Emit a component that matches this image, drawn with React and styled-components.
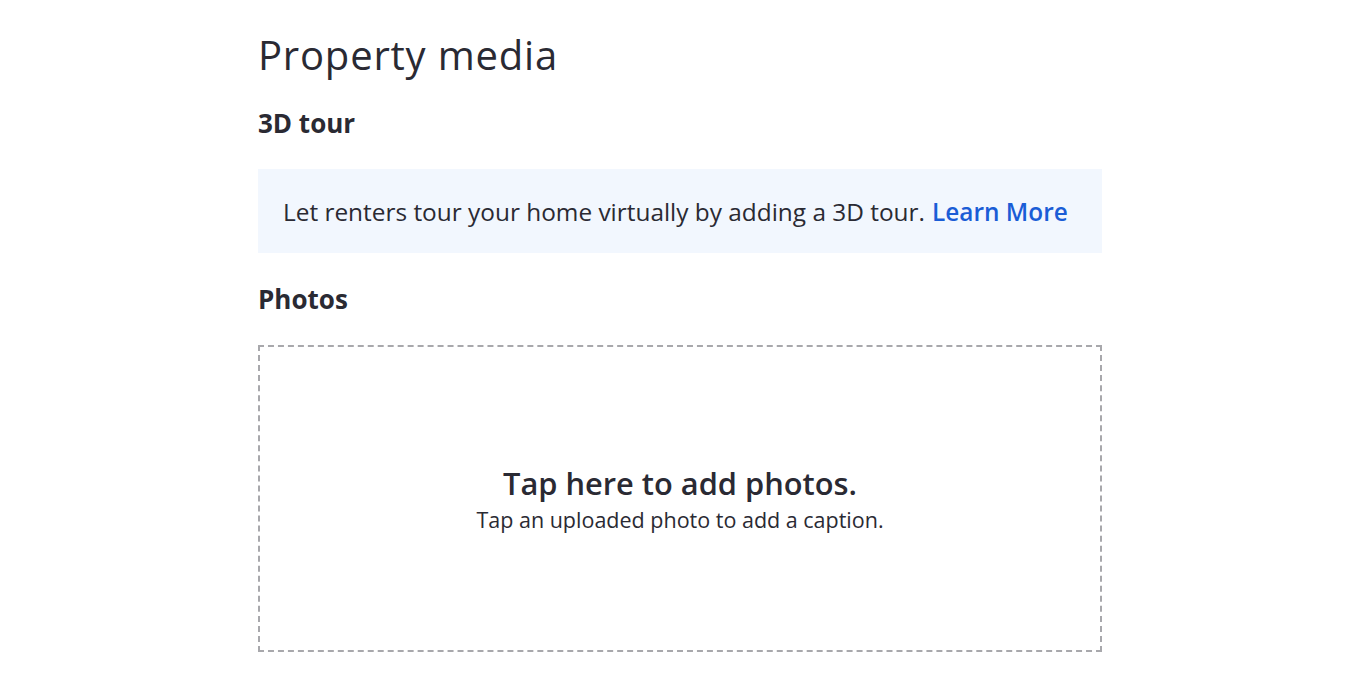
import styled, { createGlobalStyle } from 'styled-components';

const GlobalStyle = createGlobalStyle`
  body {
    margin: 0;
    background: #ffffff;
    font-family: "Open Sans", "Noto Sans", sans-serif;
    color: #2a2a33;
  }
`;

const Page = styled.main`
  width: 844px;
  margin: 0 auto 0 258px;
  padding-top: 30px;
`;

const Title = styled.h1`
  margin: 0;
  font-size: 40px;
  font-weight: 400;
  letter-spacing: 0.8px;
  line-height: 50px;
  color: #2a2a33;
`;

const SectionTitle = styled.h2`
  margin: ${({ $top }) => $top}px 0 0;
  font-size: 26px;
  font-weight: 700;
  line-height: 30px;
  color: #2a2a33;
`;

const Banner = styled.div`
  margin-top: 31px;
  height: 84px;
  box-sizing: border-box;
  padding: 0 25px;
  display: flex;
  align-items: center;
  background: #f2f7fe;
  font-size: 24.4px;
  color: #2a2a33;
`;

const Link = styled.a`
  margin-left: 7px;
  color: #1a5dd6;
  font-weight: 600;
  text-decoration: none;
  cursor: pointer;
`;

const DropZone = styled.div`
  margin-top: 31px;
  height: 307px;
  box-sizing: border-box;
  border: 2px dashed #a8a8ac;
  display: flex;
  flex-direction: column;
  align-items: center;
  justify-content: center;
  cursor: pointer;
`;

const DropTitle = styled.div`
  margin-bottom: 4px;
  font-size: 30.8px;
  font-weight: 600;
  line-height: 38px;
  color: #2a2a33;
`;

const DropHint = styled.div`
  font-size: 21.5px;
  line-height: 28px;
  color: #2a2a33;
`;

export default function App() {
  return (
    <>
      <GlobalStyle />
      <Page>
        <Title>Property media</Title>
        <SectionTitle $top={28}>3D tour</SectionTitle>
        <Banner>
          Let renters tour your home virtually by adding a 3D tour.
          <Link>Learn More</Link>
        </Banner>
        <SectionTitle $top={31}>Photos</SectionTitle>
        <DropZone>
          <DropTitle>Tap here to add photos.</DropTitle>
          <DropHint>Tap an uploaded photo to add a caption.</DropHint>
        </DropZone>
      </Page>
    </>
  );
}
